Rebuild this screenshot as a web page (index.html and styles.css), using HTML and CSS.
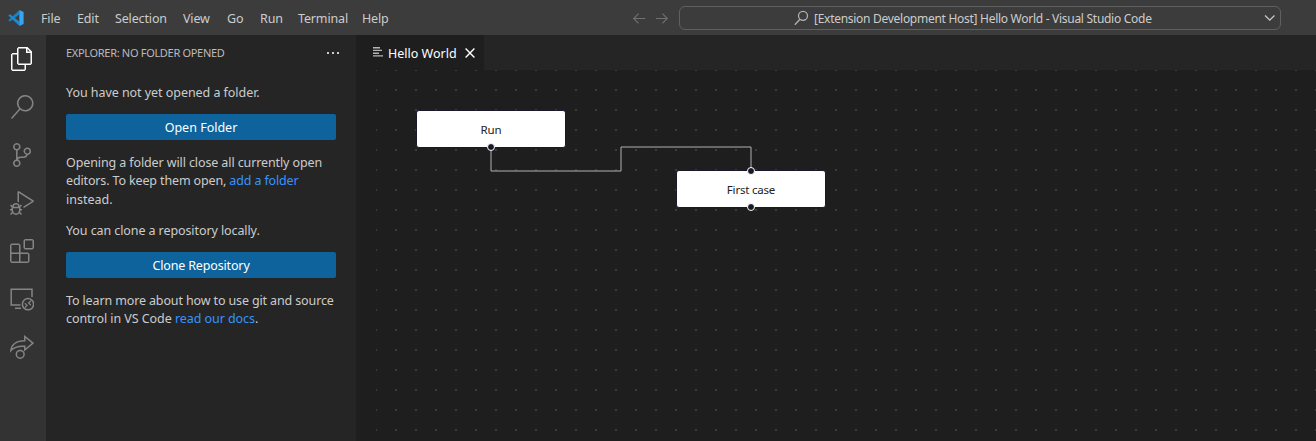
FILE: index.html
```html
<!DOCTYPE html>
<html lang="en">
<head>
<meta charset="utf-8">
<title>Hello World - Visual Studio Code</title>
<link rel="stylesheet" href="styles.css">
</head>
<body>
<header class="titlebar">
  <svg class="logo" viewBox="0 0 16 16"><path d="M.3 10.300 11.300.2V4.500L2 11.600z" fill="#1b80c4"/><path d="M.3 5.500 2 4.200 11.300 11.500V15.800z" fill="#1c8bd3"/><path d="M11.300.1 15.600 2V14l-4.300 1.900z" fill="#35a6f2"/></svg>
  <nav class="menu">
    <span class="m-file">File</span><span class="m-edit">Edit</span><span class="m-sel">Selection</span><span class="m-view">View</span><span class="m-go">Go</span><span class="m-run">Run</span><span class="m-term">Terminal</span><span class="m-help">Help</span>
  </nav>
  <div class="history">
    <svg viewBox="0 0 16 16"><path d="M14 8H2.200M7 2.800 1.800 8 7 13.200"/></svg>
    <svg viewBox="0 0 16 16"><path d="M2 8h11.800M9 2.800 14.200 8 9 13.200"/></svg>
  </div>
  <div class="command">
    <svg class="lens" viewBox="0 0 16 16"><circle cx="9" cy="5.800" r="4.500"/><path d="M6 9.200 .8 14.800"/></svg>
    <span class="command-text">[Extension Development Host] Hello World - Visual Studio Code</span>
    <svg class="chevron" viewBox="0 0 16 16"><path d="m3.300 4.800 5 5 5-5"/></svg>
  </div>
</header>
<main class="workbench">
  <aside class="activity">
    <svg class="active" viewBox="0 0 24 24"><path d="M17.500 0H8.500L7 1.500V6H2.500L1 7.500v15.070L2.500 24h12.070L16 22.570V18h4.700l1.300-1.430V4.500L17.500 0zm0 2.120l2.380 2.380H17.500V2.120zm-3 20.380h-12v-15H7v9.070L8.500 18h6v4.500zm6-6h-12v-15H16V6h4.500v10.500z"/></svg>
    <svg viewBox="0 0 24 24"><path d="M15.250 0a8.250 8.250 0 0 0-6.180 13.720L1 22.880l1.120 1 8.050-9.120A8.251 8.251 0 1 0 15.250.01V0zm0 15a6.750 6.750 0 1 1 0-13.500 6.750 6.750 0 0 1 0 13.500z"/></svg>
    <svg viewBox="0 0 24 24"><path d="M21.007 8.222A3.738 3.738 0 0 0 15.045 5.200a3.737 3.737 0 0 0 1.156 6.583 2.988 2.988 0 0 1-2.668 1.670h-2.990a4.456 4.456 0 0 0-2.989 1.165V7.400a3.737 3.737 0 1 0-1.494 0v9.117a3.776 3.776 0 1 0 1.816.099 2.990 2.990 0 0 1 2.668-1.667h2.990a4.484 4.484 0 0 0 4.223-3.039 3.736 3.736 0 0 0 3.250-3.687zM4.565 3.738a2.242 2.242 0 1 1 4.484 0 2.242 2.242 0 0 1-4.484 0zm4.484 16.441a2.242 2.242 0 1 1-4.484 0 2.242 2.242 0 0 1 4.484 0zm8.221-9.715a2.242 2.242 0 1 1 0-4.485 2.242 2.242 0 0 1 0 4.485z"/></svg>
    <svg viewBox="0 0 24 24"><path d="M10.940 13.500l-1.320 1.320a3.730 3.730 0 0 0-7.240 0L1.060 13.500 0 14.560l1.720 1.720-.22.22V18H0v1.500h1.500v.08c.077.489.214.966.41 1.420L0 22.940 1.060 24l1.650-1.650A4.308 4.308 0 0 0 6 24a4.310 4.310 0 0 0 3.290-1.650L10.940 24 12 22.940 10.090 21c.198-.464.336-.951.41-1.450v-.1H12V18h-1.500v-1.500l-.22-.22L12 14.560l-1.060-1.060zM6 13.500a2.250 2.250 0 0 1 2.250 2.250h-4.500A2.250 2.250 0 0 1 6 13.500zm3 6a3.330 3.330 0 0 1-3 3 3.330 3.330 0 0 1-3-3v-2.250h6v2.250zm14.760-9.900v1.260L13.500 17.370V15.600l8.500-5.370L9 2v9.460a5.070 5.070 0 0 0-1.500-.72V.63L8.640 0l15.120 9.600z"/></svg>
    <svg viewBox="0 0 24 24"><path d="M13.500 1.500L15 0h7.500L24 1.500V9l-1.500 1.500H15L13.500 9V1.500zm1.500 0V9h7.500V1.500H15zM0 15V6l1.500-1.500H9L10.500 6v7.500H18l1.500 1.500v7.500L18 24H1.500L0 22.500V15zm9-1.500V6H1.500v7.500H9zM9 15H1.500v7.500H9V15zm1.500 7.500H18V15h-7.500v7.500z"/></svg>
    <svg class="line" viewBox="0 0 24 24"><path d="M22 10V2.200H1.200V18H10.500M5 21.200h6"/><circle cx="18" cy="17.200" r="5.600"/><path d="m14.800 16.200 2.300 2.200-2.300 2.200M20.900 13.800l-2.300 2.200 2.300 2.200" stroke-width="1.200"/></svg>
    <svg class="line" viewBox="0 0 24 24"><path d="M.9 15.500C1.500 9.500 6.500 5.700 14.800 5.800V1.500L23 8.200 14.800 15V11.200C8.500 10.800 4 12 .9 15.500z"/><circle cx="10.200" cy="19.300" r="3.900"/></svg>
  </aside>
  <section class="sidebar">
    <div class="side-head"><h2>EXPLORER: NO FOLDER OPENED</h2><svg class="more" viewBox="0 0 16 16"><path d="M2 7h2v2H2zM7 7h2v2H7zM12 7h2v2h-2z"/></svg></div>
    <div class="welcome">
      <p class="t1">You have not yet opened a folder.</p>
      <button class="b1">Open Folder</button>
      <p><span class="t2">Opening a folder will close all currently open</span><br><span class="t3">editors. To keep them open, <a>add a folder</a></span><br><span class="t4">instead.</span></p>
      <p class="t5">You can clone a repository locally.</p>
      <button class="b2">Clone Repository</button>
      <p><span class="t6">To learn more about how to use git and source</span><br><span class="t7">control in VS Code <a>read our docs</a>.</span></p>
    </div>
  </section>
  <section class="editor">
    <div class="tabs">
      <div class="tab">
        <svg class="lines" viewBox="0 0 10 10"><path d="M0 0h7v1.500H0zM0 2.800h9v1.200H0zM0 5.500h6v1.500H0zM0 8.200h10v1.300H0z"/></svg>
        <span class="tab-text">Hello World</span>
        <svg class="close" viewBox="0 0 16 16"><path d="m3.600 3.600 8.800 8.800m0-8.800-8.800 8.800"/></svg>
      </div>
    </div>
    <div class="canvas">
      <svg class="edges" width="940" height="371"><path d="M115 78V101H245V77H375V101"/></svg>
      <div class="node run"><span>Run</span><i class="handle bottom"></i></div>
      <div class="node first"><i class="handle top"></i><span>First case</span><i class="handle bottom"></i></div>
    </div>
  </section>
</main>
</body>
</html>
```
FILE: styles.css
```css
* { box-sizing: border-box; }
body { margin: 0; width: 1316px; height: 441px; overflow: hidden; background: #1e1e1e; color: #ccc; font: 12.5px/18px "Noto Sans", "Open Sans", sans-serif; }
svg { display: block; flex: none; }
p, h2 { margin: 0; font-weight: 400; white-space: nowrap; }
.titlebar { height: 35px; background: #3c3c3c; display: flex; align-items: center; padding-top: 1px; }
.logo { width: 16px; height: 16px; margin-left: 8px; }
.menu { display: flex; width: 608px; padding: 2px 0 0 17px; gap: 16px; white-space: nowrap; letter-spacing: -0.15px; }
.menu span { flex: none; }
.m-file { width: 20px; }
.m-edit { width: 22px; }
.m-sel { width: 52px; }
.m-view { width: 28px; }
.m-go { width: 17px; }
.m-run { width: 22px; }
.m-term { width: 48px; }
.history { display: flex; gap: 7px; width: 47px; }
.history svg { width: 15px; height: 15px; fill: none; stroke: #707070; stroke-width: 1.2; }
.command { width: 602px; height: 24px; border: 1px solid #606060; border-radius: 6px; display: flex; align-items: center; padding: 0 3px 0 114px; }
.lens { width: 16px; height: 16px; fill: none; stroke: #b0b0b0; stroke-width: 1.3; }
.command-text { margin-left: 4px; padding-top: 2px; flex: 1; white-space: nowrap; font-size: 12px; letter-spacing: -0.28px; }
.chevron { width: 15px; height: 15px; fill: none; stroke: #ccc; stroke-width: 1.3; }
.workbench { display: flex; height: 406px; }
.activity { width: 46px; background: #333; display: flex; flex-direction: column; align-items: center; gap: 24px; padding: 12px 2px 0 0; }
.activity svg { width: 24px; height: 24px; fill: #858585; }
.activity .active { fill: #fff; }
.activity .line { fill: none; stroke: #858585; stroke-width: 1.5; }
.sidebar { width: 310px; background: #252526; padding: 0 20px; }
.side-head { height: 35px; display: flex; align-items: center; justify-content: space-between; margin-right: -5px; }
.side-head h2 { font-size: 11px; letter-spacing: -0.31px; color: #bbb; }
.more { width: 16px; height: 16px; fill: #ccc; }
.welcome { padding-top: 14px; display: flex; flex-direction: column; }
.welcome p { line-height: 18.7px; }
.welcome a { color: #3794ff; }
.welcome button { height: 26px; margin: 11px 0 14px; padding: 2px 0 0; border: 0; border-radius: 2px; background: #0e639c; color: #fff; font: inherit; }
.t1 { letter-spacing: -0.05px; }
.t2 { letter-spacing: -0.11px; }
.t3 { letter-spacing: -0.14px; }
.welcome .t5 { margin-top: 12px; letter-spacing: -0.09px; }
.t6 { letter-spacing: -0.13px; }
.t7 { letter-spacing: -0.06px; }
.welcome .b2 { letter-spacing: -0.15px; }
.editor { flex: 1; display: flex; flex-direction: column; min-width: 0; }
.tabs { height: 35px; background: #252526; display: flex; }
.tab { width: 128px; background: #1e1e1e; color: #fff; display: flex; align-items: center; padding-left: 17px; }
.lines { width: 10px; height: 10px; fill: #b5b5b5; margin-top: -1px; }
.tab-text { width: 68px; margin-left: 5px; padding-top: 2px; white-space: nowrap; }
.close { width: 16px; height: 16px; margin-left: 6px; fill: none; stroke: #fff; stroke-width: 1.4; }
.canvas { position: relative; flex: 1; margin-left: 20px; overflow: hidden; background: conic-gradient(from 90deg at 18px 18px, #3b3b3b 25%, transparent 0) 1px 1px / 20px 20px; }
.edges { position: absolute; left: 0; top: 0; fill: none; stroke: #b1b1b7; stroke-width: 1; }
.node { position: absolute; width: 150px; height: 38px; padding-top: 2px; border: 1px solid #1a192b; border-radius: 3px; background: #fff; color: #222; font-size: 11.5px; letter-spacing: -0.2px; display: flex; align-items: center; justify-content: center; }
.run { left: 40px; top: 40px; }
.first { left: 300px; top: 100px; }
.handle { position: absolute; left: 70px; width: 8px; height: 8px; border: 1px solid #fff; border-radius: 50%; background: #1a192b; }
.bottom { bottom: -4px; }
.top { top: -4px; }
```
